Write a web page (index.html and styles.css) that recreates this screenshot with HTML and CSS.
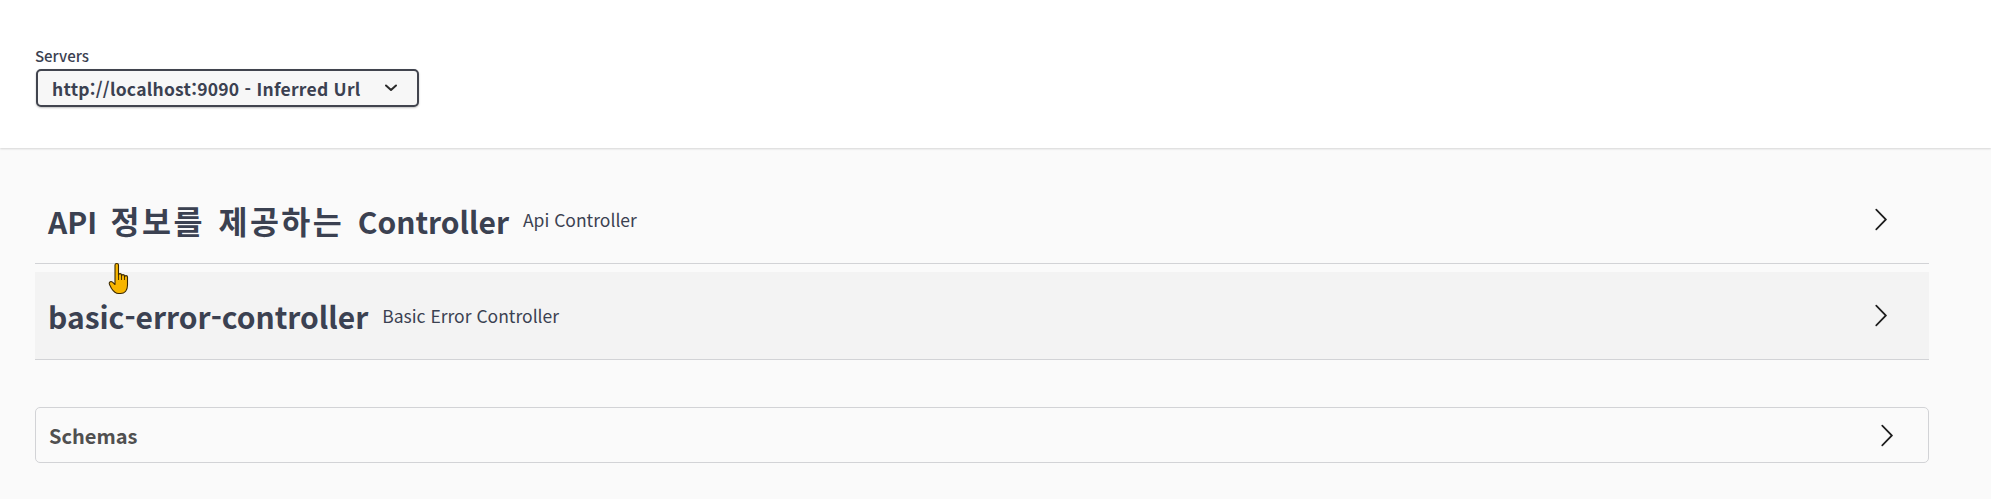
FILE: index.html
```html
<!DOCTYPE html>
<html lang="ko">
<head>
<meta charset="utf-8">
<title>Swagger UI</title>
<link rel="stylesheet" href="styles.css">
</head>
<body>
<div class="scheme-container">
  <div class="servers">
    <span class="servers-title">Servers</span>
    <div class="select">
      <span class="select-value">http://localhost:9090 - Inferred Url</span>
      <svg class="select-arrow" width="12" height="8" viewBox="0 0 12 8"><path d="M1 1.5 L6 6 L11 1.5" fill="none" stroke="#2b2b2b" stroke-width="2" stroke-linecap="round" stroke-linejoin="round"/></svg>
    </div>
  </div>
</div>

<div class="content">
  <section class="tag-section">
    <h3 class="tag">
      <span class="tag-name tag-name-ko">API <span class="ko">정보를</span> <span class="ko">제공하는</span> Controller</span>
      <small class="tag-desc">Api Controller</small>
      <span class="spacer"></span>
      <svg class="arrow" width="25" height="25" viewBox="0 0 20 20"><path d="M13.25 10L6.109 2.58a.697.697 0 0 1 0-.979.68.68 0 0 1 .969 0l7.83 7.908a.697.697 0 0 1 0 .979l-7.83 7.908c-.268.271-.701.271-.969 0a.697.697 0 0 1 0-.979L13.25 10z" fill="#1d1d1d"/></svg>
    </h3>
  </section>
  <section class="tag-section">
    <h3 class="tag tag-hover">
      <span class="tag-name">basic-error-controller</span>
      <small class="tag-desc">Basic Error Controller</small>
      <span class="spacer"></span>
      <svg class="arrow" width="25" height="25" viewBox="0 0 20 20"><path d="M13.25 10L6.109 2.58a.697.697 0 0 1 0-.979.68.68 0 0 1 .969 0l7.83 7.908a.697.697 0 0 1 0 .979l-7.83 7.908c-.268.271-.701.271-.969 0a.697.697 0 0 1 0-.979L13.25 10z" fill="#1d1d1d"/></svg>
    </h3>
  </section>

  <section class="models">
    <h4 class="models-title">
      <span>Schemas</span>
      <span class="spacer"></span>
      <svg class="arrow" width="25" height="25" viewBox="0 0 20 20"><path d="M13.25 10L6.109 2.58a.697.697 0 0 1 0-.979.68.68 0 0 1 .969 0l7.83 7.908a.697.697 0 0 1 0 .979l-7.83 7.908c-.268.271-.701.271-.969 0a.697.697 0 0 1 0-.979L13.25 10z" fill="#1d1d1d"/></svg>
    </h4>
  </section>
</div>

<svg class="cursor" width="24" height="34" viewBox="0 0 24 34"><path d="M7 3 C7 1 10.5 1 10.5 3 L10.5 13 C10.5 11.2 13.5 11.2 13.5 13 L13.5 14 C13.5 12.2 16.5 12.2 16.5 14 L16.5 15 C16.5 13.2 19.5 13.2 19.5 15 L19.5 23 C19.5 28.5 16.5 31.5 12.5 31.5 L10.5 31.5 C7.5 31.5 5.5 29.5 3.5 26.5 L1.5 22.5 C0.5 20.5 2.5 18.5 4.5 20.2 L7 22.5 Z" fill="#f7b500" stroke="#3a2800" stroke-width="1.1" stroke-linejoin="round"/><path d="M10.5 13 L10.5 18 M13.5 14 L13.5 18 M16.5 15 L16.5 18" stroke="#3a2800" stroke-width="0.9" fill="none"/></svg>
</body>
</html>
```

FILE: styles.css
```css
html, body {
  margin: 0;
  padding: 0;
}

body {
  background: #fafafa;
  font-family: "Noto Sans CJK KR", "Noto Sans", sans-serif;
  color: #3b4151;
  position: relative;
  min-height: 499px;
}

.scheme-container {
  background: #ffffff;
  height: 148px;
  box-sizing: border-box;
  padding: 45px 0 0 35px;
  box-shadow: 0 1px 2px 0 rgba(0, 0, 0, 0.15);
}

.servers {
  display: flex;
  flex-direction: column;
  align-items: flex-start;
}

.servers-title {
  font-size: 15px;
  font-weight: 500;
  line-height: 22px;
  color: #3b4151;
  margin-bottom: 2px;
}

.select {
  display: flex;
  align-items: center;
  width: 383px;
  height: 38px;
  box-sizing: border-box;
  margin-left: 1px;
  border: 2px solid #41444e;
  border-radius: 5px;
  background: #f7f7f7;
  box-shadow: 0 1px 2px 0 rgba(0, 0, 0, 0.25);
  padding: 0 0 0 14px;
}

.select-value {
  font-size: 17.5px;
  font-weight: 700;
  letter-spacing: 0.25px;
  color: #3b4151;
  white-space: nowrap;
  width: 333px;
}

.select-arrow {
  display: block;
}

.content {
  padding: 28px 62px 0 35px;
}

.tag-section {
  margin: 0;
}

.tag {
  display: flex;
  align-items: center;
  height: 88px;
  box-sizing: border-box;
  margin: 0 0 8px 0;
  padding: 0 36px 0 13px;
  border-bottom: 1px solid #d2d3d6;
}

.tag-hover {
  background: #f3f3f3;
}

.tag-name {
  font-size: 30px;
  font-weight: 700;
  color: #3b4151;
  white-space: nowrap;
}

.tag-name-ko {
  word-spacing: 5px;
}

.ko {
  font-size: 31.5px;
  letter-spacing: 2.5px;
}

.tag-desc {
  font-size: 17.5px;
  font-weight: 400;
  color: #3b4151;
  margin-left: 14px;
  white-space: nowrap;
}

.spacer {
  flex: 1;
}

.arrow {
  display: block;
}

.models {
  margin-top: 47px;
}

.models-title {
  display: flex;
  align-items: center;
  margin: 0;
  height: 56px;
  box-sizing: border-box;
  padding: 0 29px 0 13px;
  border: 1px solid #d2d3d6;
  border-radius: 5px;
  background: #fafafa;
  font-size: 20px;
  font-weight: 700;
  color: #505050;
}

.cursor {
  position: absolute;
  left: 108px;
  top: 262px;
}
```
